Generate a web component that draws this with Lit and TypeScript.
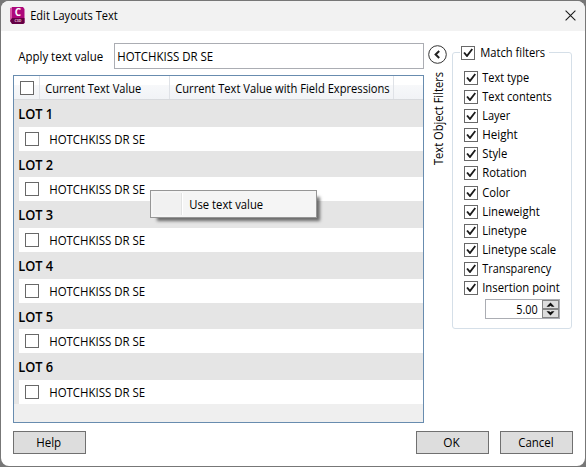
import { LitElement, html, css, svg } from "lit";
import { customElement, property } from "lit/decorators.js";

/** A single line of text fitted to a fixed advance width. */
@customElement("fit-label")
class FitLabel extends LitElement {
  @property() text = "";
  @property({ type: Number }) width = 0;
  static styles = css`
    :host { display: block; flex: none; }
    svg { display: block; overflow: visible; }
    text { font-family: "Open Sans", "Noto Sans", sans-serif; fill: currentColor; }
  `;
  render() {
    return html`<svg width=${this.width} height="16">
      ${svg`<text x="-0.8" y="12" textLength=${this.width} lengthAdjust="spacingAndGlyphs">${this.text}</text>`}
    </svg>`;
  }
}

@customElement("check-box")
class CheckBox extends LitElement {
  @property({ type: Boolean }) checked = false;
  static styles = css`
    :host { display: block; flex: none; box-sizing: border-box; width: 14px; height: 14px; border: 1px solid #686868; background: #fff; }
    svg { display: block; }
  `;
  render() {
    return this.checked
      ? html`<svg width="12" height="12" viewBox="0 0 12 12"><path d="M1.3 6.1L2.8 5L4.9 7.4L9.6 1.4L11 2.5L5.4 10.1H4.6Z" fill="#1c1c1c" /></svg>`
      : null;
  }
}

const filters: [string, number][] = [
  ["Text type", 47], ["Text contents", 69.5], ["Layer", 28], ["Height", 35.5],
  ["Style", 25], ["Rotation", 44.5], ["Color", 28], ["Lineweight", 57.5],
  ["Linetype", 44.5], ["Linetype scale", 74], ["Transparency", 69], ["Insertion point", 77.5],
];

@customElement("app-root")
class AppRoot extends LitElement {
  static styles = css`
    :host { display: block; width: 586px; height: 467px; background: #777; font-size: 12px; color: #000; overflow: hidden; }
    * { box-sizing: border-box; }
    .window { position: relative; display: flex; flex-direction: column; width: 584px; height: 465px; margin-left: 1px; border-radius: 8px; background: #fff; overflow: hidden; }
    .frame { padding-top: 1px; height: 467px; }
    .title { display: flex; height: 30px; background: #f2f2f2; padding: 7px 9px 0 8px; }
    .title fit-label { margin: 0 auto 0 6px; }
    .logo { display: block; margin-top: -1px; }
    .close { display: block; margin-top: 2px; }
    .body { display: grid; grid-template-columns: 411px 28px 120px; height: 392px; padding: 12px 0 0 12px; }
    .apply { display: flex; align-items: flex-start; padding-left: 5.5px; height: 32px; }
    .apply > fit-label { margin-top: 6px; }
    .input { margin-left: auto; width: 310px; height: 26px; border: 1px solid #abadb3; padding: 5px 0 0 3px; }
    .table { height: 348px; border: 1px solid #688caf; background: #efefef; }
    .head { display: flex; height: 24px; background: linear-gradient(#fff 0 40%, #f7f8fa 41%, #f1f3f6); border-bottom: 1px solid #d8dadd; }
    .head > div { border-right: 1px solid #dfe2e7; padding: 5px 0 0 5.5px; }
    .head .pick { width: 26px; padding-left: 6px; }
    .head .value { width: 130px; }
    .head .expr { width: 224px; }
    .lot { height: 50.65px; background: #e5e5e5; }
    .lot-name { height: 26.65px; padding: 7px 0 0 4.5px; font-size: 13.5px; font-weight: 600; }
    .row { display: flex; height: 24px; margin-left: 5px; padding: 5px 0 0 6px; background: #fff; }
    .row fit-label { margin-left: 10.5px; }
    .rail { display: flex; flex-direction: column; align-items: center; padding-top: 2px; }
    .collapse { display: block; margin-left: -2px; }
    .side { display: block; margin: 7px 0 0 -1px; overflow: visible; }
    .side text { font: 12.4px "Open Sans", "Noto Sans", sans-serif; }
    .filters { position: relative; height: 277px; margin-top: 9px; padding: 18px 0 0 11px; border: 1px solid #d5dfe8; border-radius: 3px; }
    .legend { position: absolute; left: 7px; top: -7px; display: flex; gap: 5.5px; width: 89px; padding-left: 1px; background: #fff; }
    .filter { display: flex; gap: 5px; height: 19.1px; }
    .filter fit-label { margin-top: -1px; }
    .legend fit-label { margin-top: -1px; }
    .spin { display: flex; width: 75px; height: 20px; margin: -1px 0 0 21px; border: 1px solid #abadb3; }
    .spin fit-label { margin: 2px 4px 0 auto; }
    .arrows { display: grid; width: 17px; grid-template-rows: 9px 9px; }
    .arrows div { border: 1px solid #858585; background: #ddd; }
    .arrows svg { display: block; }
    .foot { display: flex; gap: 11px; padding: 8px 0 0 12px; }
    .btn { display: flex; justify-content: center; width: 73px; height: 23px; padding-top: 3px; border: 1px solid #707070; background: #ddd; }
    .help { margin-right: 319px; }
    .menu { position: absolute; left: 149px; top: 189px; display: flex; width: 167px; height: 28px; padding: 2px; border: 1px solid #969696; background: #f5f5f5; box-shadow: 5px 5px 3px -2px #0008; }
    .gutter { width: 29px; background: #f1f1f1; border-right: 1px solid #e2e3e3; box-shadow: 1px 0 #fff; }
    .menu fit-label { margin: 4px 0 0 7.5px; }
  `;

  render() {
    return html`<div class="frame"><div class="window">
      <div class="title">
        <svg class="logo" width="16" height="18" viewBox="0 0 16 18">
          <path d="M1 1L4 0V16L1 14Z" fill="#d65aa6" /><path d="M3 0H14L15.5 2V16L14 17H3Z" fill="#ad087b" />
          <path d="M3 11H15.5V16L14 17H3L1 14Z" fill="#640044" />
          <text x="9" y="9.2" text-anchor="middle" font-family="Open Sans" font-size="10" font-weight="700" fill="#fff">C</text>
          <text x="9" y="14.8" text-anchor="middle" font-family="Open Sans" font-size="3.6" font-weight="700" fill="#eac3dc">C3D</text>
        </svg>
        <fit-label text="Edit Layouts Text" width="87.5"></fit-label>
        <svg class="close" width="11" height="11" viewBox="0 0 11 11"><path d="M.6.6L10.4 10.4M10.4.6L.6 10.4" stroke="#1b1b1b" stroke-width="1.1" /></svg>
      </div>
      <div class="body">
        <div>
          <div class="apply">
            <fit-label text="Apply text value" width="85"></fit-label>
            <div class="input"><fit-label text="HOTCHKISS DR SE" width="96"></fit-label></div>
          </div>
          <div class="table">
            <div class="head">
              <div class="pick"><check-box></check-box></div>
              <div class="value"><fit-label text="Current Text Value" width="96"></fit-label></div>
              <div class="expr"><fit-label text="Current Text Value with Field Expressions" width="214.5"></fit-label></div>
            </div>
            ${[1, 2, 3, 4, 5, 6].map((n) => html`<div class="lot">
              <div class="lot-name"><fit-label text="LOT ${n}" width="35"></fit-label></div>
              <div class="row"><check-box></check-box><fit-label text="HOTCHKISS DR SE" width="96"></fit-label></div>
            </div>`)}
          </div>
        </div>
        <div class="rail">
          <svg class="collapse" width="19" height="19" viewBox="0 0 19 19"><circle cx="9.5" cy="9.5" r="8.8" fill="#fff" stroke="#333" /><path d="M11.2 6L7.6 9.5L11.2 13" fill="none" stroke="#222" stroke-width="2" /></svg>
          <svg class="side" width="16" height="95" viewBox="0 0 16 95"><text transform="translate(13 94) rotate(-90)" textLength="93" lengthAdjust="spacingAndGlyphs">Text Object Filters</text></svg>
        </div>
        <div class="filters">
          <div class="legend"><check-box checked></check-box><fit-label text="Match filters" width="65"></fit-label></div>
          ${filters.map(([name, width]) => html`<div class="filter"><check-box checked></check-box><fit-label text=${name} width=${width}></fit-label></div>`)}
          <div class="spin">
            <fit-label text="5.00" width="21.5"></fit-label>
            <div class="arrows">
              <div><svg width="15" height="7" viewBox="0 0 15 7"><path d="M3.5 5.8L7.5 1.6L11.5 5.8H8.8L7.5 4.7L6.2 5.8Z" fill="#111" /></svg></div>
              <div><svg width="15" height="7" viewBox="0 0 15 7"><path d="M3.5 1.2L7.5 5.4L11.5 1.2H8.8L7.5 2.3L6.2 1.2Z" fill="#111" /></svg></div>
            </div>
          </div>
        </div>
      </div>
      <div class="foot">
        <div class="btn help"><fit-label text="Help" width="25"></fit-label></div>
        <div class="btn"><fit-label text="OK" width="16.5"></fit-label></div>
        <div class="btn"><fit-label text="Cancel" width="35.5"></fit-label></div>
      </div>
      <div class="menu"><div class="gutter"></div><fit-label text="Use text value" width="74"></fit-label></div>
    </div></div>`;
  }
}
